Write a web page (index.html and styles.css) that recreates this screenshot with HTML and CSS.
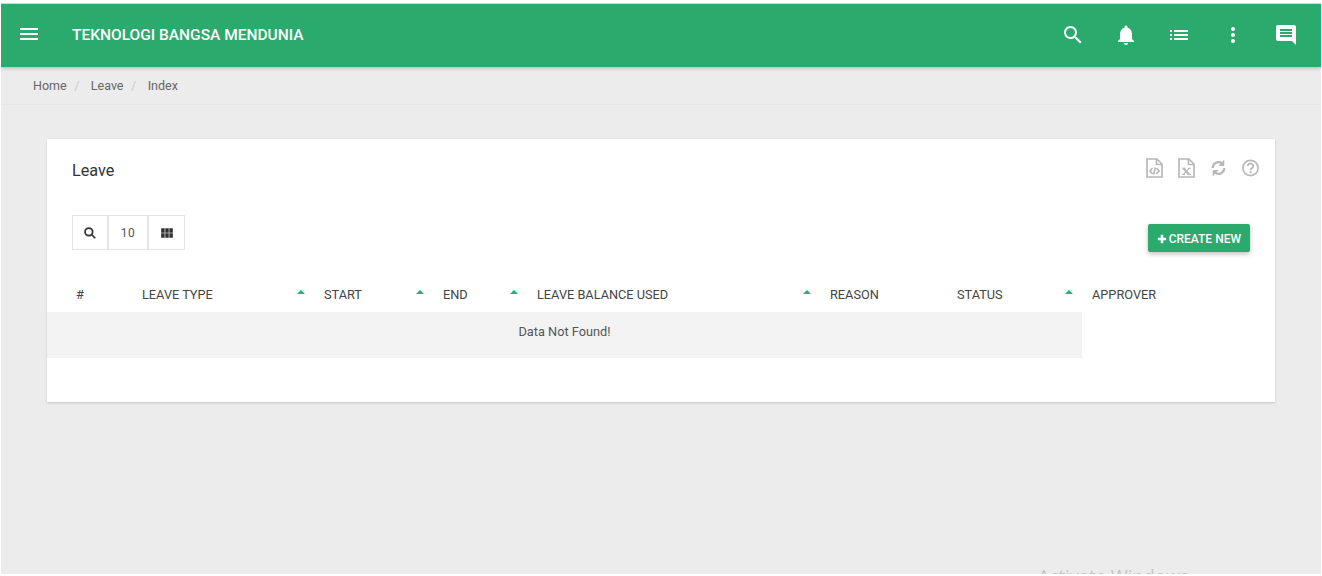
FILE: index.html
```html
<!DOCTYPE html>
<html lang="en">
<head>
  <meta charset="UTF-8" />
  <meta name="viewport" content="width=device-width, initial-scale=1.0" />
  <title>Leave</title>
  <link rel="stylesheet" href="styles.css">
</head>
<body>
  <div class="page">
    <header class="topbar">
      <svg class="icon menu-icon" viewBox="0 0 24 24"><path d="M3 18h18v-2H3v2zm0-5h18v-2H3v2zm0-7v2h18V6H3z"/></svg>
      <div class="brand">TEKNOLOGI BANGSA MENDUNIA</div>
      <nav class="topbar-icons">
        <svg class="icon" viewBox="0 0 24 24"><path d="M15.5 14h-.79l-.28-.27C15.41 12.59 16 11.11 16 9.5 16 5.91 13.09 3 9.5 3S3 5.91 3 9.5 5.91 16 9.5 16c1.61 0 3.09-.59 4.23-1.57l.27.28v.79l5 4.99L20.49 19l-4.99-5zm-6 0C7.01 14 5 11.99 5 9.5S7.01 5 9.5 5 14 7.01 14 9.5 11.99 14 9.5 14z"/></svg>
        <svg class="icon" viewBox="0 0 24 24"><path d="M12 22c1.1 0 2-.9 2-2h-4c0 1.1.89 2 2 2zm6-6v-5c0-3.07-1.64-5.64-4.5-6.32V4c0-.83-.67-1.5-1.5-1.5s-1.5.67-1.5 1.5v.68C7.63 5.36 6 7.92 6 11v5l-2 2v1h16v-1l-2-2z"/></svg>
        <svg class="icon" viewBox="0 0 24 24"><path d="M3 13h2v-2H3v2zm0 4h2v-2H3v2zm0-8h2V7H3v2zm4 4h14v-2H7v2zm0 4h14v-2H7v2zM7 7v2h14V7H7z"/></svg>
        <svg class="icon" viewBox="0 0 24 24"><path d="M12 8c1.1 0 2-.9 2-2s-.9-2-2-2-2 .9-2 2 .9 2 2 2zm0 2c-1.1 0-2 .9-2 2s.9 2 2 2 2-.9 2-2-.9-2-2-2zm0 6c-1.1 0-2 .9-2 2s.9 2 2 2 2-.9 2-2-.9-2-2-2z"/></svg>
        <svg class="icon" viewBox="0 0 24 24"><path d="M21.99 4c0-1.1-.89-2-1.99-2H4c-1.1 0-2 .9-2 2v12c0 1.1.9 2 2 2h14l4 4-.01-18zM18 14H6v-2h12v2zm0-3H6V9h12v2zm0-3H6V6h12v2z"/></svg>
      </nav>
    </header>

    <ol class="breadcrumb">
      <li>Home</li>
      <li class="sep">/</li>
      <li>Leave</li>
      <li class="sep">/</li>
      <li>Index</li>
    </ol>

    <main class="content">
      <section class="card">
        <div class="card-head">
          <h2 class="card-title">Leave</h2>
          <div class="card-actions">
            <svg class="tool-icon" viewBox="0 0 17 20"><path d="M1 1h10l5 5v13H1z M10.500 1v5.500H16"/><path d="M6.500 10l-2.500 3 2.500 3 M10.500 10l2.500 3-2.500 3 M9.400 9.500l-1.800 7"/></svg>
            <svg class="tool-icon" viewBox="0 0 17 20"><path d="M1 1h10l5 5v13H1z M10.500 1v5.500H16"/><path d="M5.500 10.200l5.500 6.300" stroke-width="2.200"/><path d="M11.300 10.200l-6 6.300 M4 10.200h3.200 M9.800 10.200h3 M4 16.500h3 M9.800 16.500h3.200" stroke-width="1.100"/></svg>
            <svg class="tool-icon" viewBox="0 0 17 20"><path d="M2.700 10a5.800 5.800 0 0 1 9.200-4.700 M14.300 10a5.800 5.800 0 0 1-9.200 4.700" stroke-width="2.200"/><path class="solid" d="M14.300 1.500v6.500h-6z M2.700 18.500V12h6z"/></svg>
            <svg class="tool-icon" viewBox="0 0 17 20"><circle cx="8.500" cy="10" r="7.600" stroke-width="1.700"/><path d="M5.800 8a2.700 2.500 0 1 1 4.300 2c-1 .7-1.600 1.100-1.600 2.300" stroke-width="1.900"/><path class="solid" d="M7.500 13.300h2v2h-2z"/></svg>
          </div>
        </div>

        <div class="toolbar">
          <div class="btn-group">
            <button class="group-btn search-btn"><svg viewBox="0 0 24 24"><circle cx="10" cy="10" r="6.500"/><path d="M15 15l6 6"/></svg></button>
            <button class="group-btn size-btn">10</button>
            <button class="group-btn cols-btn"><svg viewBox="0 0 24 24"><path class="solid" d="M2 4h6v7.500H2zM9 4h6v7.500H9zM16 4h6v7.500h-6zM2 12.500h6V20H2zM9 12.500h6V20H9zM16 12.500h6V20h-6z"/></svg></button>
          </div>
          <button class="create-btn">
            <svg viewBox="0 0 12 12"><path d="M4.500 1h3v3.500H11v3H7.500V11h-3V7.500H1v-3h3.500z"/></svg>
            CREATE NEW
          </button>
        </div>

        <table class="grid">
          <colgroup>
            <col class="col-num"><col class="col-type"><col class="col-start"><col class="col-end"><col class="col-used"><col class="col-reason"><col class="col-status"><col class="col-approver">
          </colgroup>
          <thead>
            <tr>
              <th class="first">#</th>
              <th class="sortable">LEAVE TYPE</th>
              <th class="sortable">START</th>
              <th class="sortable">END</th>
              <th class="sortable">LEAVE BALANCE USED</th>
              <th>REASON</th>
              <th class="sortable">STATUS</th>
              <th>APPROVER</th>
            </tr>
          </thead>
          <tbody>
            <tr>
              <td class="empty" colspan="7">Data Not Found!</td>
              <td class="blank"></td>
            </tr>
          </tbody>
        </table>
      </section>
    </main>

    <div class="watermark">Activate Windows</div>
  </div>
</body>
</html>
```

FILE: styles.css
```css
* {
  box-sizing: border-box;
}

html,
body {
  margin: 0;
  padding: 0;
  height: 576px;
  overflow: hidden;
}

body {
  font-family: Roboto, "Liberation Sans", sans-serif;
  background: #fff;
  color: #444;
}

.page {
  position: relative;
  margin: 4px 1px 2px 1px;
  height: 570px;
  background: #ececec;
  overflow: hidden;
  box-shadow: 0 -1px 0 #d6d6d6;
}

/* top bar */
.topbar {
  display: flex;
  align-items: center;
  height: 63px;
  padding: 0 23px 0 16px;
  background: #2aab6d;
  color: #fff;
  box-shadow: 0 1px 4px rgba(0, 0, 0, 0.25);
}

.icon {
  width: 24px;
  height: 24px;
  fill: #fff;
  display: block;
}

.menu-icon {
  margin-right: 31px;
  margin-top: -3px;
}

.brand {
  font-size: 15.500px;
  font-weight: 500;
  margin-top: -2px;
}

.topbar-icons {
  margin-left: auto;
  display: flex;
  gap: 29.300px;
  margin-top: -2px;
}

/* breadcrumb */
.breadcrumb {
  display: flex;
  gap: 9.500px;
  list-style: none;
  margin: 0;
  height: 38px;
  padding: 0 0 0 32px;
  align-items: center;
  font-size: 12.500px;
  color: #666;
  border-bottom: 1px solid #e6e6e6;
}

.breadcrumb .sep {
  color: #ccc;
  margin: 0 2px 0 -2px;
}

/* card */
.content {
  padding: 34px 46px 0;
}

.card {
  background: #fff;
  height: 263px;
  box-shadow: 0 1px 2px rgba(0, 0, 0, 0.18);
}

.card-head {
  display: flex;
  justify-content: space-between;
  align-items: center;
  height: 60px;
  padding: 0 16px 0 25px;
}

.card-title {
  margin: 0;
  font-size: 16.200px;
  font-weight: 400;
  color: #333;
  margin-top: 2px;
}

.card-actions {
  display: flex;
  gap: 15px;
  margin-top: -3px;
}

.tool-icon {
  width: 17px;
  height: 20px;
  fill: none;
  stroke: #b8b8b8;
  stroke-width: 1.700;
}

.solid {
  fill: currentColor;
  stroke: none;
}

.tool-icon .solid {
  fill: #b8b8b8;
}

/* toolbar */
.toolbar {
  display: flex;
  justify-content: space-between;
  align-items: flex-start;
  padding: 16px 25px 0;
  height: 77px;
}

.btn-group {
  display: flex;
}

.group-btn {
  height: 35px;
  background: #fff;
  border: 1px solid #e6e6e6;
  border-radius: 0;
  padding: 0;
  display: flex;
  align-items: center;
  justify-content: center;
  font-family: inherit;
  font-size: 12px;
  letter-spacing: 0.6px;
  color: #555;
}

.group-btn svg {
  width: 14px;
  height: 14px;
  fill: none;
  stroke: #333;
  stroke-width: 3;
  color: #333;
}

.search-btn {
  width: 36px;
}

.size-btn {
  width: 40px;
}

.cols-btn {
  width: 37px;
}

.create-btn {
  display: flex;
  align-items: center;
  gap: 2px;
  height: 28px;
  margin-top: 9px;
  padding: 1px 9px 0;
  background: #2aab6d;
  border: none;
  border-radius: 2px;
  color: #fff;
  font-family: inherit;
  font-size: 12px;
  font-weight: 500;
  box-shadow: 0 2px 5px rgba(0, 0, 0, 0.26);
}

.create-btn svg {
  width: 10px;
  height: 10px;
  fill: #fff;
}

/* table */
.grid {
  width: 1228px;
  border-collapse: collapse;
  table-layout: fixed;
  font-size: 12.750px;
}

.col-num { width: 85px; }
.col-type { width: 182px; }
.col-start { width: 119px; }
.col-end { width: 94px; }
.col-used { width: 293px; }
.col-reason { width: 127px; }
.col-status { width: 135px; }

.grid th {
  position: relative;
  height: 36px;
  padding: 0 10px;
  text-align: left;
  font-weight: 400;
  color: #444;
}

.grid th.first {
  padding-left: 29px;
}

.grid th.sortable::after {
  content: "";
  position: absolute;
  top: 14px;
  right: 9px;
  border-left: 4px solid transparent;
  border-right: 4px solid transparent;
  border-bottom: 4px solid #1fb56e;
}

.grid td {
  height: 46px;
  padding: 0 0 8px;
  font-size: 12.750px;
  color: #555;
  text-align: center;
}

.grid td.empty {
  background: #f3f3f3;
}

/* windows activation text bleeding in at the bottom */
.watermark {
  position: absolute;
  left: 1037px;
  top: 559px;
  font-family: "Open Sans", sans-serif;
  font-size: 18.400px;
  color: #c4c4c4;
}
```
